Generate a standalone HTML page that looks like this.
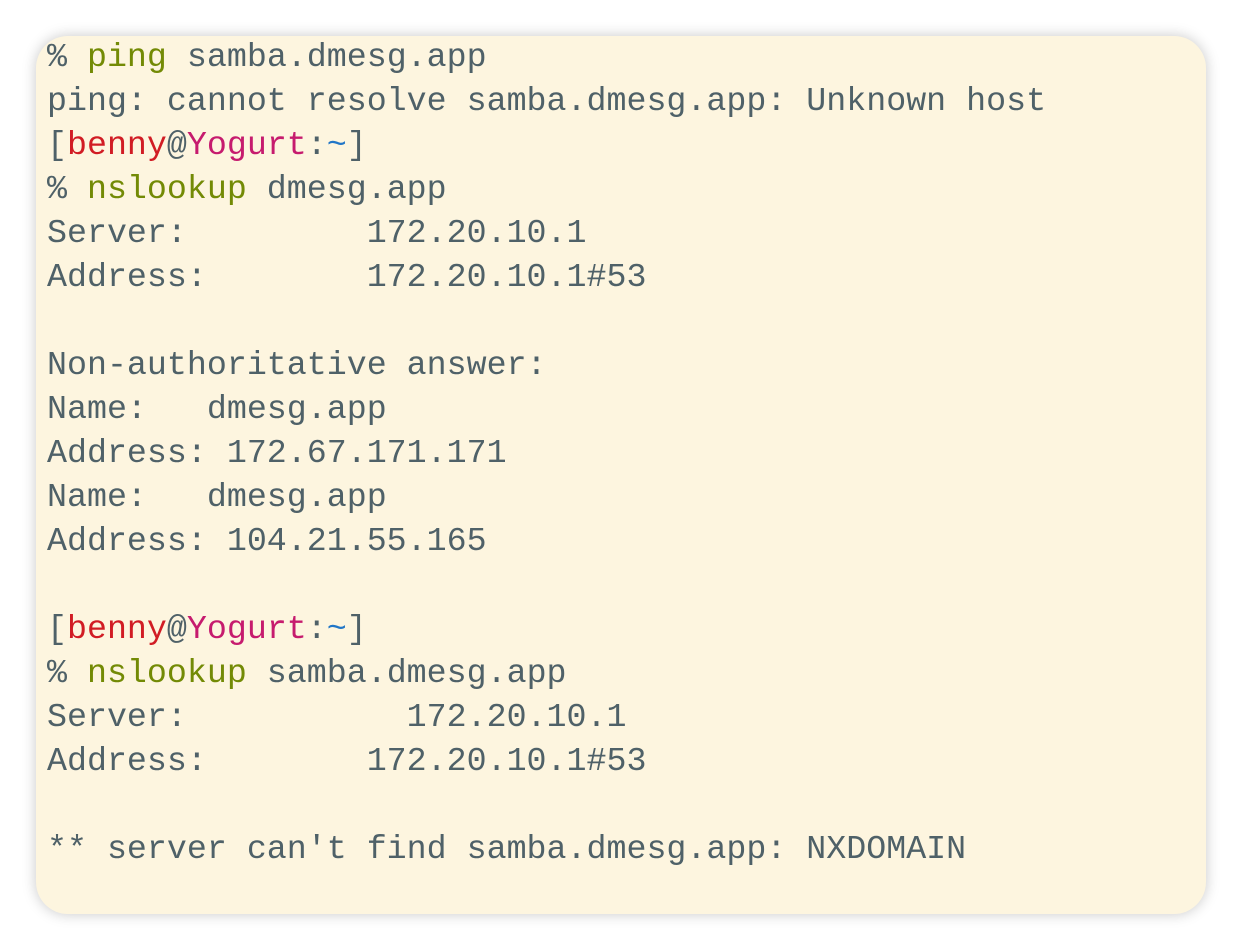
<!DOCTYPE html>
<html><head><meta charset="utf-8"><style>
html,body{margin:0;padding:0;background:#fff;width:1242px;height:950px;overflow:hidden}
.card{position:absolute;left:36px;top:36px;width:1170px;height:878px;background:#fdf5df;border-radius:32px;box-shadow:0 0 14px rgba(0,0,0,0.22)}
pre{position:absolute;left:47px;top:35px;margin:0;font-family:"Liberation Mono",monospace;font-size:33.3px;line-height:44px;color:#4f6168}
.g{color:#738a05}.r{color:#d11c24}.m{color:#c61b6e}.b{color:#2176c7}
</style></head><body>
<div class="card"></div>
<pre>% <span class="g">ping</span> samba.dmesg.app
ping: cannot resolve samba.dmesg.app: Unknown host
[<span class="r">benny</span>@<span class="m">Yogurt</span>:<span class="b">~</span>]
% <span class="g">nslookup</span> dmesg.app
Server:         172.20.10.1
Address:        172.20.10.1#53

Non-authoritative answer:
Name:   dmesg.app
Address: 172.67.171.171
Name:   dmesg.app
Address: 104.21.55.165

[<span class="r">benny</span>@<span class="m">Yogurt</span>:<span class="b">~</span>]
% <span class="g">nslookup</span> samba.dmesg.app
Server:           172.20.10.1
Address:        172.20.10.1#53

** server can't find samba.dmesg.app: NXDOMAIN</pre>
</body></html>
